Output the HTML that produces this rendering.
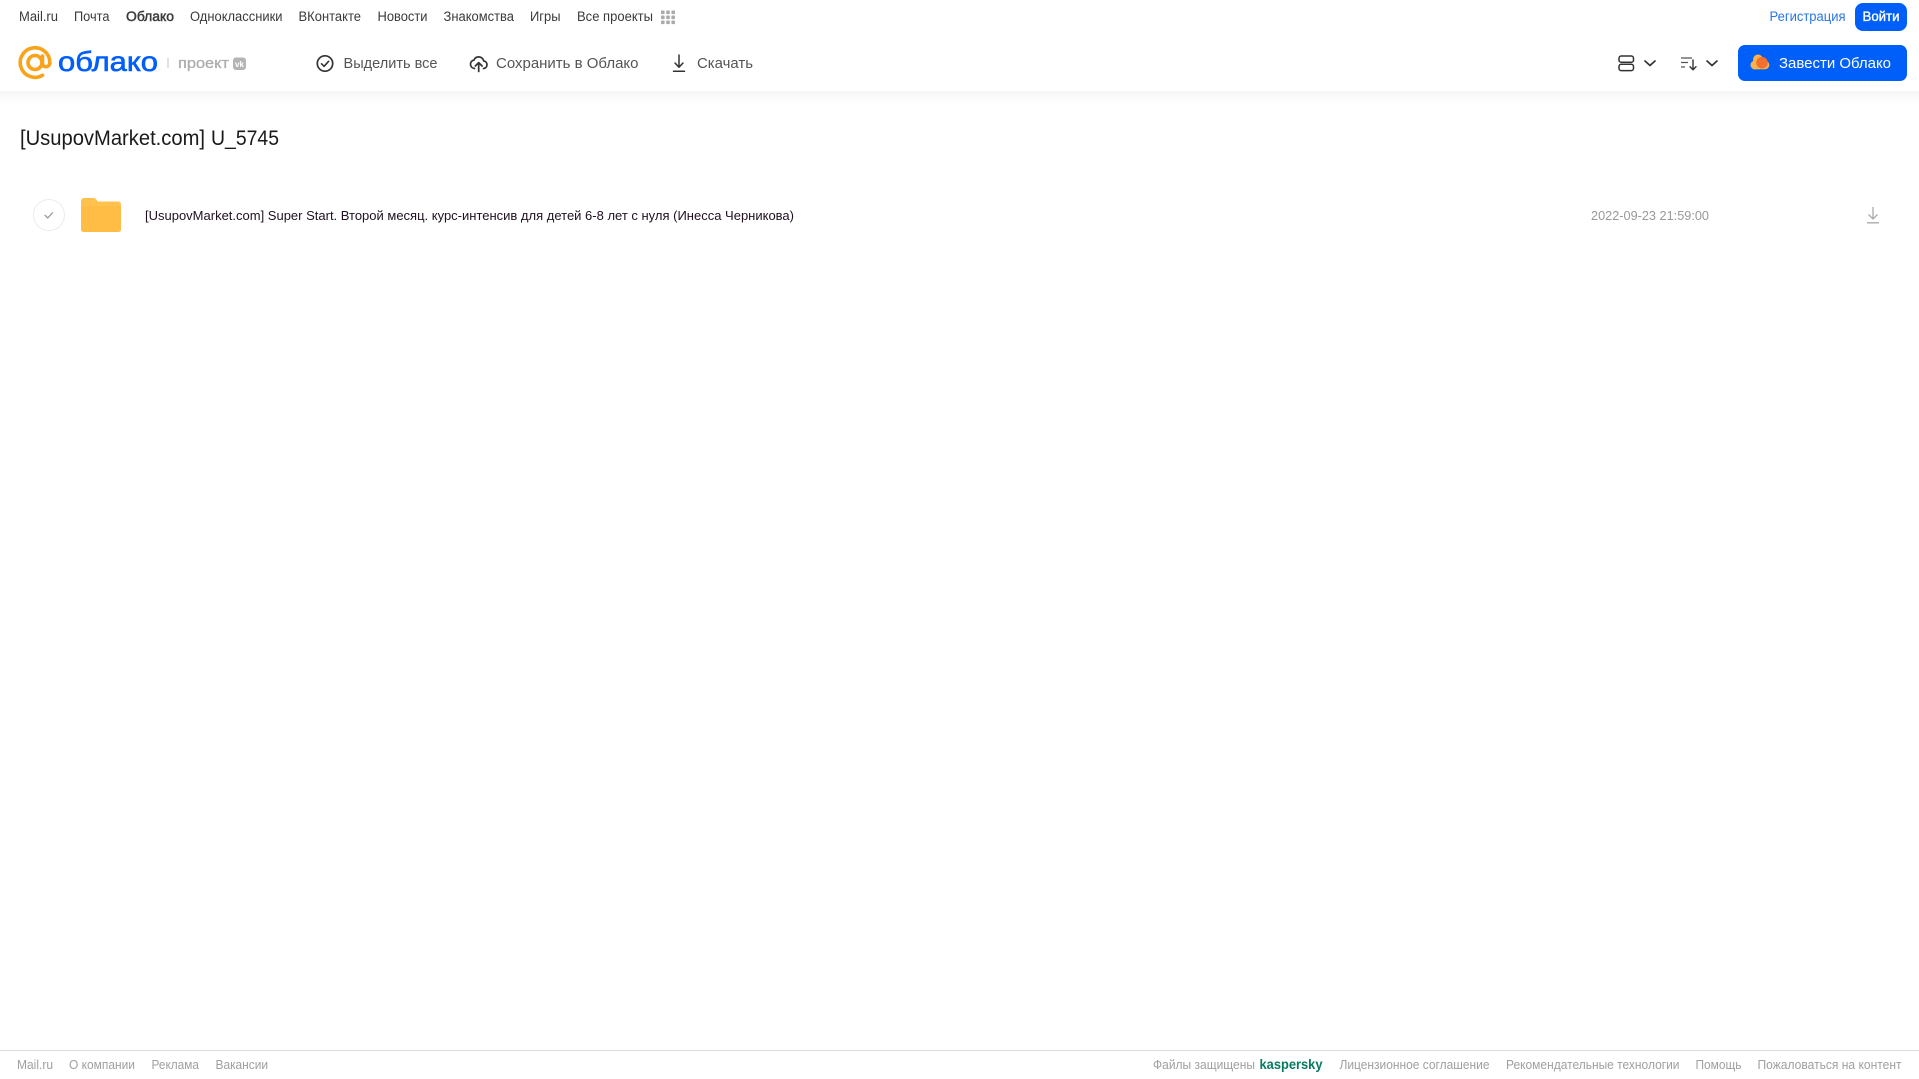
<!DOCTYPE html>
<html lang="ru">
<head>
<meta charset="utf-8">
<title>[UsupovMarket.com] U_5745</title>
<style>
html,body{margin:0;padding:0;background:#fff;width:1919px;height:1079px;overflow:hidden}
svg{display:block}
text{font-family:"Liberation Sans",Arial,sans-serif}
.n{font-size:13.5px;fill:#3a3a3a}
.t{font-size:15px;fill:#555}
.f{font-size:12.5px;fill:#a0a0a0}
</style>
</head>
<body>
<svg width="1919" height="1079" viewBox="0 0 1919 1079" xmlns="http://www.w3.org/2000/svg">
<defs>
<linearGradient id="sh" x1="0" y1="0" x2="0" y2="1"><stop offset="0" stop-color="#f5f5f5"/><stop offset="1" stop-color="#fff"/></linearGradient>
</defs>
<rect width="1919" height="1079" fill="#fff"/>
<rect x="0" y="91" width="1919" height="12" fill="url(#sh)"/>

<!-- top nav -->
<text class="n" x="19" y="21" textLength="39" lengthAdjust="spacingAndGlyphs">Mail.ru</text>
<text class="n" x="74" y="21" textLength="35.500" lengthAdjust="spacingAndGlyphs">Почта</text>
<text class="n" x="126" y="21" textLength="48" lengthAdjust="spacingAndGlyphs" stroke="#3a3a3a" stroke-width=".45">Облако</text>
<text class="n" x="190" y="21" textLength="92.500" lengthAdjust="spacingAndGlyphs">Одноклассники</text>
<text class="n" x="298.500" y="21" textLength="62.500" lengthAdjust="spacingAndGlyphs">ВКонтакте</text>
<text class="n" x="377.500" y="21" textLength="50" lengthAdjust="spacingAndGlyphs">Новости</text>
<text class="n" x="443.500" y="21" textLength="70.500" lengthAdjust="spacingAndGlyphs">Знакомства</text>
<text class="n" x="530" y="21" textLength="30.500" lengthAdjust="spacingAndGlyphs">Игры</text>
<text class="n" x="577" y="21" textLength="76" lengthAdjust="spacingAndGlyphs">Все проекты</text>
<g fill="#aaa">
<rect x="661" y="10.500" width="3.600" height="3.600" rx=".8"/><rect x="666.200" y="10.500" width="3.600" height="3.600" rx=".8"/><rect x="671.400" y="10.500" width="3.600" height="3.600" rx=".8"/>
<rect x="661" y="15.500" width="3.600" height="3.600" rx=".8"/><rect x="666.200" y="15.500" width="3.600" height="3.600" rx=".8"/><rect x="671.400" y="15.500" width="3.600" height="3.600" rx=".8"/>
<rect x="661" y="20.500" width="3.600" height="3.600" rx=".8"/><rect x="666.200" y="20.500" width="3.600" height="3.600" rx=".8"/><rect x="671.400" y="20.500" width="3.600" height="3.600" rx=".8"/>
</g>

<text x="1769.500" y="21" font-size="13.500" fill="#2a76e6" textLength="76" lengthAdjust="spacingAndGlyphs">Регистрация</text>
<rect x="1855" y="3" width="52" height="28" rx="8" fill="#005ff9"/>
<text x="1862.500" y="21" font-size="13.500" fill="#fff" stroke="#fff" stroke-width=".35" textLength="37" lengthAdjust="spacingAndGlyphs">Войти</text>

<!-- logo -->
<circle cx="35" cy="62.500" r="7" fill="none" stroke="#f9a31a" stroke-width="3.600"/>
<path d="M42.500 56V63.500C42.500 68 49.800 68 49.800 62.500A14.800 14.800 0 1 0 42.500 75.300" fill="none" stroke="#f9a31a" stroke-width="3.600" stroke-linecap="round" stroke-linejoin="round"/>
<text x="58" y="71" font-size="27.500" fill="#005ff9" stroke="#005ff9" stroke-width=".6" textLength="100" lengthAdjust="spacingAndGlyphs">облако</text>
<rect x="167.500" y="58" width="1" height="10" fill="#c4c4c4"/>
<text x="178" y="68" font-size="14.500" fill="#adadad" stroke="#adadad" stroke-width=".3" textLength="51" lengthAdjust="spacingAndGlyphs">проект</text>
<rect x="233" y="57.500" width="13" height="12.500" rx="3" fill="#b4b4b4"/>
<text x="235" y="67" font-size="8" font-weight="700" fill="#fff" textLength="9" lengthAdjust="spacingAndGlyphs">vk</text>

<!-- toolbar -->
<circle cx="325" cy="63.500" r="7.700" fill="none" stroke="#333" stroke-width="1.700"/>
<path d="M321.500 63.800l2.600 2.500l4.500-5" fill="none" stroke="#333" stroke-width="1.600" stroke-linecap="round" stroke-linejoin="round"/>
<text class="t" x="343.500" y="68" textLength="94" lengthAdjust="spacingAndGlyphs">Выделить все</text>

<path d="M474.500 68.500c-2.400-.3-4-2-4-4.300c0-2.100 1.500-3.800 3.500-4.100c.8-2 2.600-3.200 4.700-3.200c2.500 0 4.600 1.700 5 4.100c1.900.2 3.300 1.800 3.300 3.700c0 2-1.400 3.500-3.500 3.800" fill="none" stroke="#333" stroke-width="1.700" stroke-linecap="round" stroke-linejoin="round"/>
<path d="M478.700 71.500v-8.500M475.300 66l3.400-3.400l3.400 3.400" fill="none" stroke="#333" stroke-width="1.700" stroke-linecap="round" stroke-linejoin="round"/>
<text class="t" x="496" y="68" textLength="142.500" lengthAdjust="spacingAndGlyphs">Сохранить в Облако</text>

<path d="M679 55v12M675 63l4 4.200l4-4.200M673.500 71.200h11" fill="none" stroke="#333" stroke-width="1.500" stroke-linecap="round" stroke-linejoin="round"/>
<text class="t" x="697" y="68" textLength="56" lengthAdjust="spacingAndGlyphs">Скачать</text>

<!-- view controls -->
<rect x="1619" y="56" width="14.500" height="6.300" rx="2.200" fill="none" stroke="#333" stroke-width="1.500"/>
<rect x="1619" y="64.300" width="14.500" height="6.300" rx="2.200" fill="none" stroke="#333" stroke-width="1.500"/>
<path d="M1645 61l5 4.500l5-4.500" fill="none" stroke="#333" stroke-width="1.700" stroke-linecap="round" stroke-linejoin="round"/>
<path d="M1681 58h11M1681 62.500h7M1681 67h4" fill="none" stroke="#555" stroke-width="1.200"/>
<path d="M1693 60v9.500M1690 66.800l3 3l3-3" fill="none" stroke="#333" stroke-width="1.400" stroke-linecap="round" stroke-linejoin="round"/>
<path d="M1707 61l5 4.500l5-4.500" fill="none" stroke="#333" stroke-width="1.700" stroke-linecap="round" stroke-linejoin="round"/>

<rect x="1738" y="45" width="169" height="36" rx="7" fill="#005ff9"/>
<g fill="#fbb347">
<circle cx="1758" cy="59.500" r="5"/>
<circle cx="1755" cy="65" r="4.500"/>
<circle cx="1765" cy="65" r="4.300"/>
<rect x="1755" y="63" width="10" height="6.300"/>
</g>
<circle cx="1762" cy="62.700" r="5.800" fill="#f4702e"/>
<text x="1779" y="68" font-size="15" fill="#fff" textLength="112" lengthAdjust="spacingAndGlyphs">Завести Облако</text>

<!-- title -->
<text x="20" y="145" font-size="21" fill="#1a1a1a" textLength="185" lengthAdjust="spacingAndGlyphs">[UsupovMarket.com]</text>
<text x="211" y="145" font-size="21" fill="#1a1a1a" textLength="68" lengthAdjust="spacingAndGlyphs">U_5745</text>

<!-- row -->
<circle cx="49" cy="215" r="15.500" fill="#fff" stroke="#ececec" stroke-width="1"/>
<path d="M45 215.300l2.800 2.700l4.700-5.200" fill="none" stroke="#999" stroke-width="1.300" stroke-linecap="round" stroke-linejoin="round"/>
<path d="M81 201c0-1.700 1.300-3 3-3h9.500c1.300 0 2 .6 2.800 1.500l1.700 2h20c1.700 0 3 1.300 3 3v24.500c0 1.700-1.300 3-3 3H84c-1.700 0-3-1.300-3-3z" fill="#ffc24f"/>
<rect x="81" y="206" width="40" height="26" rx="2.500" fill="#ffbd45"/>
<text x="145" y="220" font-size="12.500" fill="#201020" textLength="649" lengthAdjust="spacingAndGlyphs">[UsupovMarket.com] Super Start. Второй месяц. курс-интенсив для детей 6-8 лет с нуля (Инесса Черникова)</text>
<text x="1591" y="220" font-size="12.500" fill="#999" textLength="118" lengthAdjust="spacingAndGlyphs">2022-09-23 21:59:00</text>
<path d="M1873 207v12M1868.500 214.500l4.500 4.500l4.500-4.500M1867 222.800h12" fill="none" stroke="#aaa" stroke-width="1.300"/>

<!-- footer -->
<rect x="0" y="1050" width="1919" height="1" fill="#dcdcdc"/>
<text class="f" x="17" y="1069" textLength="36" lengthAdjust="spacingAndGlyphs">Mail.ru</text>
<text class="f" x="69" y="1069" textLength="66" lengthAdjust="spacingAndGlyphs">О компании</text>
<text class="f" x="151.500" y="1069" textLength="47.500" lengthAdjust="spacingAndGlyphs">Реклама</text>
<text class="f" x="215.500" y="1069" textLength="52.500" lengthAdjust="spacingAndGlyphs">Вакансии</text>
<text class="f" x="1153" y="1069" textLength="102" lengthAdjust="spacingAndGlyphs">Файлы защищены</text>
<text x="1259.500" y="1069" font-size="13.500" font-weight="700" fill="#087a62" textLength="63" lengthAdjust="spacingAndGlyphs">kaspersky</text>
<text class="f" x="1339.500" y="1069" textLength="150" lengthAdjust="spacingAndGlyphs">Лицензионное соглашение</text>
<text class="f" x="1506" y="1069" textLength="173.500" lengthAdjust="spacingAndGlyphs">Рекомендательные технологии</text>
<text class="f" x="1695.500" y="1069" textLength="46" lengthAdjust="spacingAndGlyphs">Помощь</text>
<text class="f" x="1757.500" y="1069" textLength="144" lengthAdjust="spacingAndGlyphs">Пожаловаться на контент</text>
</svg>
</body>
</html>
